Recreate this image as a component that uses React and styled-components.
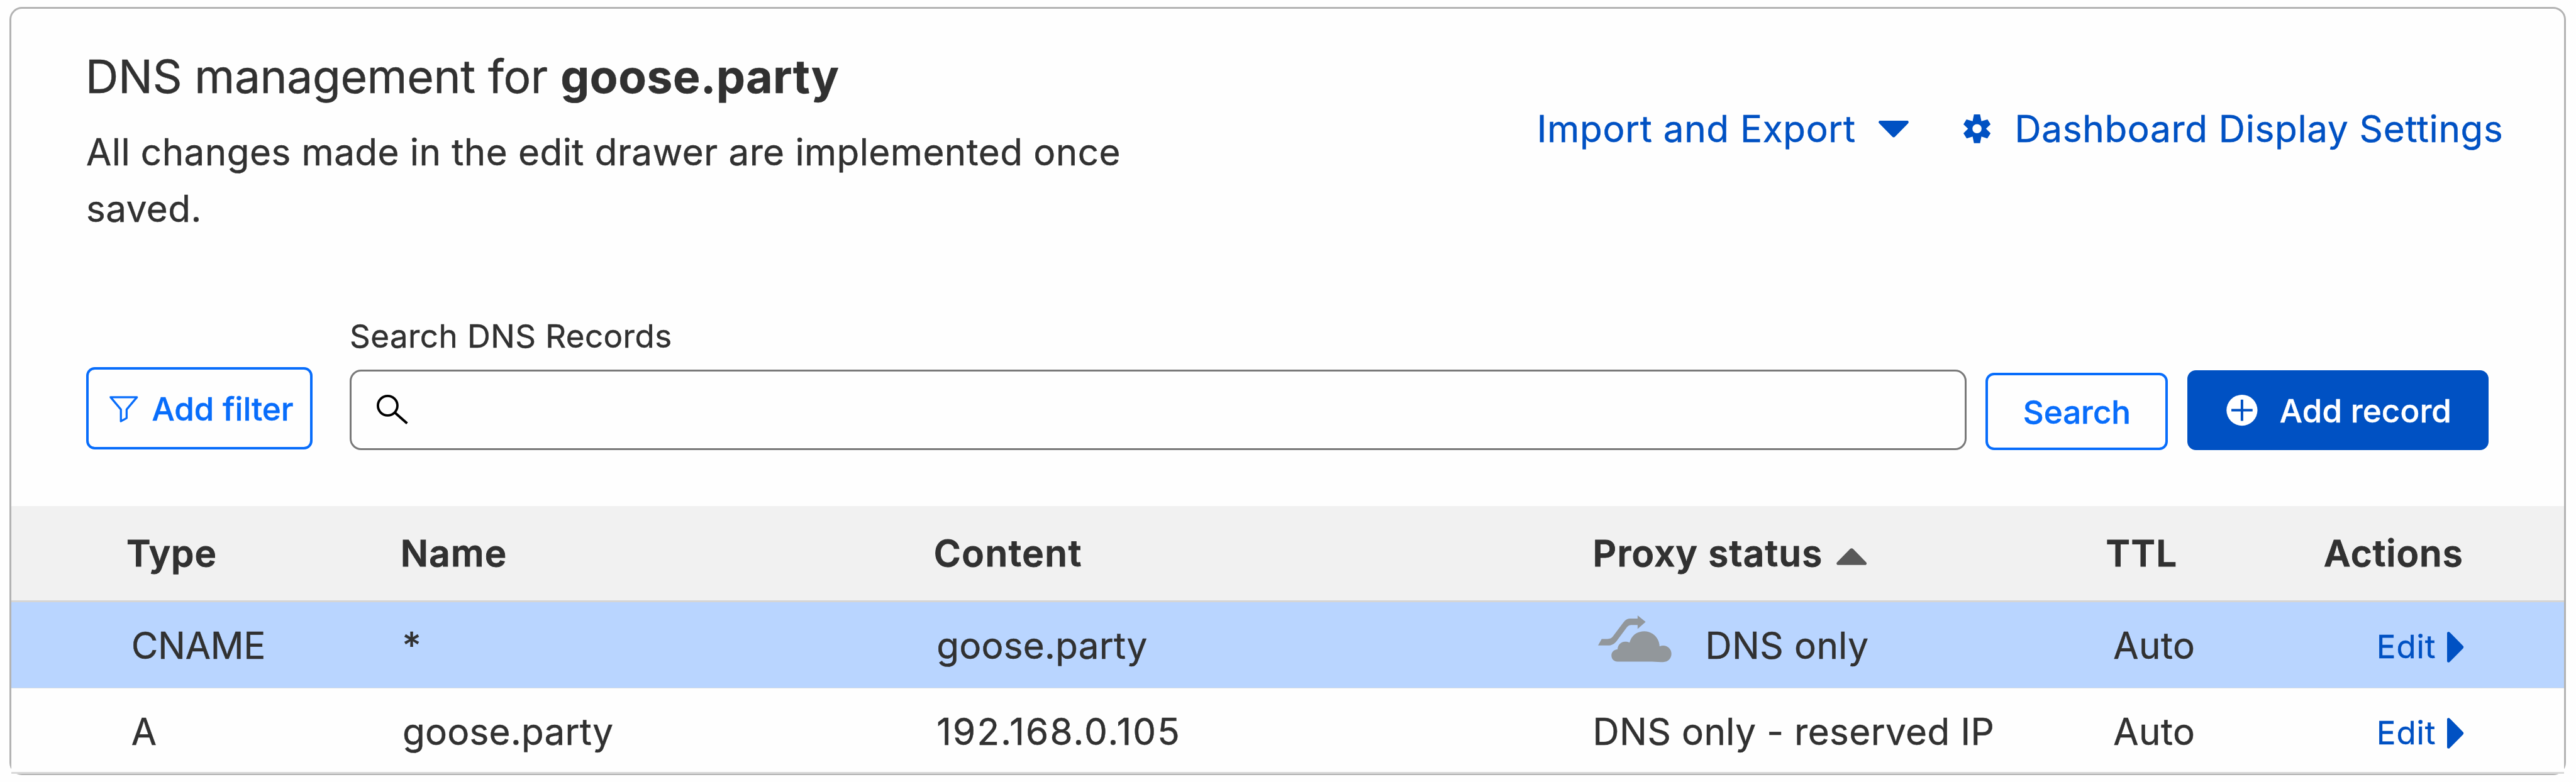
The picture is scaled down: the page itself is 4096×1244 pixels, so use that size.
import React from "react";
import styled, { createGlobalStyle } from "styled-components";

const colors = {
  text: "#313131",
  link: "#0051c3",
  accent: "#086dfb",
  line: "#d5d5d5",
  outline: "#b3b3b3",
};

/* The whole panel scales with the window: 1rem is 1/449.2 of its width. */
const GlobalStyle = createGlobalStyle`
  html { font-size: calc(100vw / 449.2); }
  body {
    margin: 0;
    background: #fefefe;
    color: ${colors.text};
    font-family: Inter, "Liberation Sans", sans-serif;
    -webkit-text-stroke: 0.05rem currentColor;
    overflow: hidden;
  }
  *, *::before, *::after { box-sizing: border-box; }
`;

const Page = styled.main`
  height: 100vh;
  padding: 1.17rem 1.78rem 0 1.66rem;
  font-size: 6.4rem;
`;

const Panel = styled.section`
  height: 134.1rem;
  border: 0.33rem solid ${colors.outline};
  border-radius: 2.2rem;
`;

const Header = styled.header`
  display: flex;
  justify-content: space-between;
  align-items: flex-start;
  padding: 6.82rem 10.55rem 0 12.9rem;
`;

const Title = styled.h1`
  margin: 0;
  font-size: 8rem;
  line-height: 10rem;
  font-weight: 400;
  letter-spacing: -0.035rem;
  white-space: nowrap;

  strong {
    font-weight: 700;
    letter-spacing: 0.066rem;
  }
`;

const Description = styled.p`
  margin: 3.32rem 0 0 0.15rem;
  width: 190rem;
  line-height: 9.87rem;
  letter-spacing: 0.05rem;
`;

const HeaderLinks = styled.nav`
  display: flex;
  gap: 9.6rem;
  margin-top: 10.25rem;
`;

const HeaderLink = styled.a`
  display: flex;
  align-items: center;
  gap: ${(p) => p.$gap};
  color: ${colors.link};
  line-height: 8rem;
  letter-spacing: 0.078rem;
  white-space: nowrap;
`;

const Icon = styled.svg`
  display: block;
  flex: none;
  width: ${(p) => p.$w}rem;
  height: ${(p) => p.$h}rem;
  margin-top: ${(p) => p.$down || 0}rem;
  margin-bottom: ${(p) => p.$up || 0}rem;
  overflow: visible;
`;

const Toolbar = styled.div`
  display: flex;
  align-items: flex-end;
  padding: 14.28rem 13.1rem 0 13.05rem;
`;

const Button = styled.button`
  display: flex;
  align-items: center;
  justify-content: center;
  flex: none;
  width: ${(p) => p.$w}rem;
  height: ${(p) => p.$h}rem;
  padding: ${(p) => p.$top}rem 0 0 ${(p) => p.$left || 0}rem;
  gap: ${(p) => p.$gap || 0}rem;
  border: 0.5rem solid ${(p) => (p.$primary ? colors.link : colors.accent)};
  border-radius: 1.5rem;
  background: ${(p) => (p.$primary ? colors.link : "#fefefe")};
  color: ${(p) => (p.$primary ? "#fff" : colors.accent)};
  font: 500 5.6rem/6rem Inter, "Liberation Sans", sans-serif;
  white-space: nowrap;
`;

const FilterButton = styled(Button)`
  margin: 0 6.46rem 0.15rem 0;
`;

const AddButton = styled(Button)`
  margin-left: 3.34rem;
  letter-spacing: 0.014rem;
`;

const Field = styled.label`
  display: flex;
  flex-direction: column;
  flex: 1;
  gap: 2.8rem;
  margin-right: 3.35rem;
  font-size: 5.6rem;
  line-height: 6rem;
  letter-spacing: 0.05rem;
`;

const SearchBox = styled.div`
  display: flex;
  align-items: center;
  height: 14.12rem;
  padding-left: 4.35rem;
  border: 0.33rem solid #797979;
  border-radius: 2rem;
`;

const SearchInput = styled.input`
  flex: 1;
  min-width: 0;
  margin-left: 2rem;
  border: 0;
  outline: 0;
  background: transparent;
  font: inherit;
`;

const Table = styled.div`
  margin-top: 9.72rem;
`;

const Row = styled.div`
  display: grid;
  grid-template-columns: 47.8rem 93rem 114.9rem 89.5rem 38rem 1fr;
  padding-left: 20.05rem;
`;

const HeadRow = styled(Row)`
  height: 16.8rem;
  border-bottom: 0.37rem solid ${colors.line};
  background: #f1f1f1;
  font-weight: 600;
  line-height: 16.5rem;
  -webkit-text-stroke-width: 0.1rem;
`;

const BodyRow = styled(Row)`
  height: ${(p) => (p.$last ? 14.85 : 15.03)}rem;
  border-bottom: ${(p) => (p.$last ? 0.33 : 0.16)}rem solid ${(p) => (p.$last ? "#d9d9d9" : "#d6dbe4")};
  background: ${(p) => (p.$selected ? "#b9d5ff" : "#fefefe")};
  line-height: 14.88rem;
`;

const HeadCell = styled.div`
  display: flex;
  align-items: center;
  gap: 2.35rem;
  height: 16.5rem;
  letter-spacing: ${(p) => p.$track}rem;
  white-space: nowrap;
`;

const Cell = styled.div`
  display: flex;
  align-items: center;
  height: 14.95rem;
  padding-left: ${(p) => p.$indent || 0}rem;
  letter-spacing: ${(p) => p.$track ?? 0.04}rem;
  white-space: nowrap;
`;

const ProxyState = styled.div`
  display: flex;
  align-items: center;
  gap: 5.9rem;
  padding-left: 0.9rem;
`;

const EditLink = styled.a`
  display: flex;
  align-items: center;
  gap: 1.9rem;
  padding-top: 0.64rem;
  color: ${colors.link};
  font-size: 5.6rem;
  line-height: 6rem;
  letter-spacing: 0.1rem;
`;

const CaretDown = () => (
  <Icon $w={5.28} $h={2.93} viewBox="0 0 158 88">
    <path d="M5 0H153Q158 2 157 9Q157 12 153 16L86 84Q79 91 72 84L5 16Q0 12 0 8Q0 2 5 0Z" fill={colors.link} />
  </Icon>
);

const SortUp = () => (
  <Icon $w={5.3} $h={2.93} $down={1} viewBox="0 0 158 88">
    <path d="M5 88H153Q158 86 158 80Q158 76 153 72L87 4Q79 -3 71 4L5 72Q0 76 0 80Q0 86 5 88Z" fill="#595959" />
  </Icon>
);

const CaretRight = () => (
  <Icon $w={2.9} $h={5.36} viewBox="0 0 87 161">
    <path d="M0 5Q2 0 8 0Q12 0 16 5L83 73Q90 80 83 88L16 156Q12 161 8 161Q2 161 0 156Z" fill={colors.link} />
  </Icon>
);

const Gear = () => (
  <Icon $w={4.7} $h={5.03} $up={0.2} viewBox="554 86 141 151">
    <path
      fillRule="evenodd"
      fill={colors.link}
      d="M609 86H641L648 121L680 112L696 138L672 161L696 185L679 212L648 202L641 237H609L602 202L571 212L554 185L578 161L554 138L570 112L602 121ZM625 137a24 24 0 1 0 0 48a24 24 0 1 0 0-48Z"
    />
  </Icon>
);

const Funnel = () => (
  <Icon $w={5.01} $h={4.57} viewBox="0 0 50.1 45.7">
    <path d="M2 2H48L30 23.5V38.5L20 44V23.5Z" fill="none" stroke={colors.accent} strokeWidth="3.6" strokeLinejoin="round" />
  </Icon>
);

const Magnifier = () => (
  <Icon $w={5.45} $h={5.2} $up={0.2} viewBox="0 0 54.5 52">
    <circle cx="19.1" cy="19" r="17" fill="none" stroke="#000" strokeWidth="4.2" />
    <path d="M31.5 31L53 50" stroke="#000" strokeWidth="4.4" />
  </Icon>
);

const PlusCircle = () => (
  <Icon $w={5.46} $h={5.4} $up={0.3} viewBox="0 0 54 54">
    <circle cx="27" cy="27" r="27" fill="#fff" />
    <path d="M8.5 27H45.5M27 8.5V45.5" stroke={colors.link} strokeWidth="4.4" />
  </Icon>
);

const CloudBypass = () => (
  <Icon $w={12.83} $h={8.17} $up={2.18} viewBox="78 431 385 245">
    <g fill="#92979b">
      <path d="M78 588L97 554H127C142 553 149 549 156 540L208 471C221 453 232 447 250 447H285V431L327 465L285 502V481H256C241 481 235 485 226 497L176 564C163 581 150 588 130 588Z" />
      <path d="M180 609C181 581 205 558 243 573C252 536 283 514 320 514C363 514 398 548 400 593C431 580 462 601 462 632C462 658 443 675 419 675C390 676 370 673 345 673H180C161 673 148 659 148 641C148 624 161 610 180 609Z" />
    </g>
  </Icon>
);

const headings = [
  { label: "Type", track: 0.105 },
  { label: "Name", track: 0.128 },
  { label: "Content", track: 0.172 },
  { label: "Proxy status", track: 0.14, sorted: true },
  { label: "TTL", track: 0.14 },
  { label: "Actions", track: 0.109 },
];

const records = [
  { type: "CNAME", name: "*", content: "goose.party", proxy: "DNS only", cloud: true, ttl: "Auto", selected: true },
  { type: "A", name: "goose.party", content: "192.168.0.105", proxy: "DNS only - reserved IP", ttl: "Auto" },
];

export default function App() {
  return (
    <Page>
      <GlobalStyle />
      <Panel>
        <Header>
          <div>
            <Title>
              DNS management for <strong>goose.party</strong>
            </Title>
            <Description>All changes made in the edit drawer are implemented once saved.</Description>
          </div>
          <HeaderLinks>
            <HeaderLink $gap="3.93rem">
              Import and Export
              <CaretDown />
            </HeaderLink>
            <HeaderLink $gap="4.2rem">
              <Gear />
              Dashboard Display Settings
            </HeaderLink>
          </HeaderLinks>
        </Header>

        <Toolbar>
          <FilterButton $w={39.48} $h={14.43} $top={0.35} $left={0.7} $gap={2.4}>
            <Funnel />
            Add filter
          </FilterButton>
          <Field>
            Search DNS Records
            <SearchBox>
              <Magnifier />
              <SearchInput />
            </SearchBox>
          </Field>
          <Button $w={31.78} $h={13.54} $top={0.32}>
            Search
          </Button>
          <AddButton $primary $w={52.6} $h={13.97} $top={0.25} $left={0.3} $gap={3.86}>
            <PlusCircle />
            Add record
          </AddButton>
        </Toolbar>

        <Table>
          <HeadRow>
            {headings.map((h) => (
              <HeadCell key={h.label} $track={h.track}>
                {h.label}
                {h.sorted && <SortUp />}
              </HeadCell>
            ))}
          </HeadRow>
          {records.map((r, i) => (
            <BodyRow key={r.type} $selected={r.selected} $last={i === records.length - 1}>
              <Cell $indent={0.85} $track={-0.03}>{r.type}</Cell>
              <Cell $indent={0.35} $track={0.03}>{r.name}</Cell>
              <Cell $indent={0.48} $track={/^\d/.test(r.content) ? 0.24 : 0.03}>{r.content}</Cell>
              <Cell $track={0.045}>
                {r.cloud ? (
                  <ProxyState>
                    <CloudBypass />
                    {r.proxy}
                  </ProxyState>
                ) : (
                  r.proxy
                )}
              </Cell>
              <Cell $indent={1.29} $track={0.05}>{r.ttl}</Cell>
              <Cell $indent={9.18}>
                <EditLink>
                  Edit
                  <CaretRight />
                </EditLink>
              </Cell>
            </BodyRow>
          ))}
        </Table>
      </Panel>
    </Page>
  );
}
